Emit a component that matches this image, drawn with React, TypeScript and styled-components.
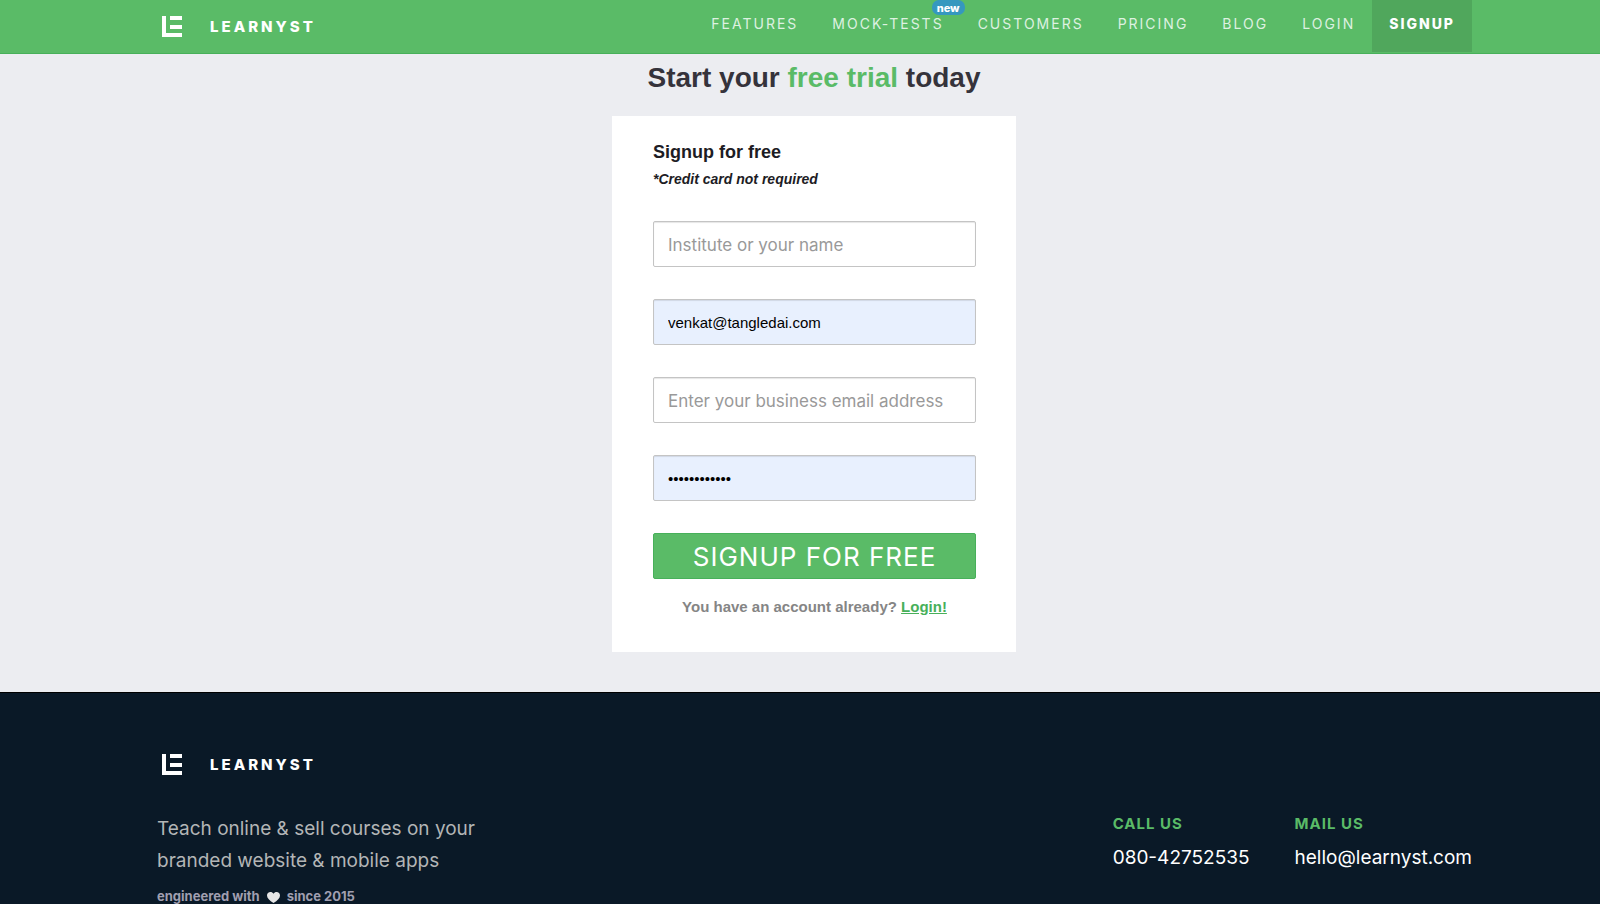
import React from "react";
import styled, { createGlobalStyle } from "styled-components";

const GlobalStyle = createGlobalStyle`
  *, *::before, *::after { box-sizing: border-box; }
  html, body { margin: 0; padding: 0; }
  body {
    background: #0a1927;
    color: #1d1c24;
    font-family: Inter, "Liberation Sans", sans-serif;
    -webkit-font-smoothing: antialiased;
  }
  h1, h2, h3, p { margin: 0; }
  a { color: inherit; text-decoration: none; }
`;

const sans = `"Liberation Sans", Arial, sans-serif`;

const Page = styled.div`
  display: flex;
  flex-direction: column;
  min-height: 100vh;
`;

const Header = styled.header`
  display: flex;
  justify-content: space-between;
  align-items: stretch;
  padding: 0 128px 0 157px;
  background: #5abb67;
  border-bottom: 1px solid #47b05a;
`;

const Brand = styled.a`
  display: flex;
  align-items: center;
  gap: 28px;
  height: 53px;
  padding-left: 5px;
  color: #fff;
`;

const Mark = styled.svg`
  display: block;
  width: 20px;
  height: 21px;
`;

const Wordmark = styled.span`
  padding-top: 1px;
  font-size: 15px;
  line-height: 20px;
  font-weight: 800;
  letter-spacing: 3px;
`;

const Nav = styled.nav`
  display: flex;
  align-items: flex-start;
`;

const NavLink = styled.a<{ $active?: boolean }>`
  position: relative;
  height: 52px;
  padding: 14px 17px 0;
  font-size: 14px;
  line-height: 20px;
  letter-spacing: 2px;
  font-weight: ${(p) => (p.$active ? 800 : 400)};
  color: ${(p) => (p.$active ? "#fff" : "#def1e1")};
  background: ${(p) => (p.$active ? "#50a75c" : "transparent")};
`;

const NewBadge = styled.span`
  position: absolute;
  top: 0;
  right: -4px;
  width: 33px;
  height: 15px;
  border-radius: 7px;
  background: #3598bf;
  color: #fff;
  font-size: 11px;
  line-height: 16px;
  font-weight: 800;
  letter-spacing: 0;
  text-align: center;
`;

const Main = styled.main`
  display: flex;
  flex-direction: column;
  align-items: center;
  padding: 0 128px 40px 156px;
  background: #ecedf1;
  font-family: ${sans};
`;

const Title = styled.h1`
  padding: 8px 0 22px;
  font-size: 28px;
  line-height: 32px;
  font-weight: 700;
  color: #35333b;
`;

const Accent = styled.span`
  color: #5abb67;
`;

const Card = styled.form`
  width: 404px;
  padding: 24px 40px 13px 41px;
  background: #fff;
`;

const CardTitle = styled.h2`
  font-size: 18px;
  line-height: 24px;
  font-weight: 700;
`;

const CardNote = styled.p`
  padding: 5px 0 32px;
  font-size: 14px;
  line-height: 20px;
  font-style: italic;
  font-weight: 700;
`;

const Field = styled.input<{ $filled?: boolean }>`
  display: block;
  width: 100%;
  height: 46px;
  margin-bottom: 32px;
  padding: 1px 14px 0;
  border: 1px solid #c4c4c4;
  border-radius: 2px;
  box-shadow: inset 0 1px 1px rgba(0, 0, 0, 0.1);
  outline: none;
  background: ${(p) => (p.$filled ? "#e8f0fe" : "#fff")};
  color: #000;
  font-family: ${(p) => (p.$filled ? sans : `Inter, ${sans}`)};
  font-size: ${(p) => (p.$filled ? 15 : 17)}px;
  &::placeholder { color: #999; opacity: 1; }
`;

const Submit = styled.button`
  display: block;
  width: 100%;
  height: 46px;
  padding: 0;
  border: 1px solid #47b05a;
  border-radius: 2px;
  background: #5abb67;
  color: #fff;
  font-family: Inter, ${sans};
  font-size: 26px;
  letter-spacing: 1px;
`;

const LoginLine = styled.p`
  padding: 18px 0 22px;
  font-size: 15px;
  line-height: 20px;
  font-weight: 700;
  text-align: center;
  color: #858585;
`;

const LoginLink = styled.a`
  color: #47b05a;
  text-decoration: underline;
`;

const Footer = styled.footer`
  flex: 1;
  padding: 45px 128px 0 157px;
  border-top: 1px solid #000;
  background: #0a1927;
`;

const FooterColumns = styled.div`
  display: flex;
  justify-content: space-between;
  align-items: flex-start;
  padding-top: 21px;
`;

const Tagline = styled.p`
  max-width: 340px;
  padding-top: 1px;
  font-size: 19px;
  line-height: 32px;
  color: #b3b5b6;
`;

const Credit = styled.p`
  display: flex;
  align-items: center;
  gap: 7px;
  height: 27px;
  padding-top: 11px;
  font-size: 13px;
  line-height: 16px;
  font-weight: 700;
  color: #a09fb0;
`;

const Heart = styled.svg`
  display: block;
  width: 13px;
  height: 11px;
  margin-top: 3px;
`;

const Contacts = styled.div`
  display: flex;
  gap: 45px;
`;

const ContactTitle = styled.h3`
  font-size: 15px;
  line-height: 24px;
  font-weight: 700;
  letter-spacing: 1px;
  color: #5abb67;
`;

const ContactLink = styled.a`
  display: block;
  padding-top: 10px;
  font-size: 19px;
  line-height: 24px;
  color: #fff;
`;

function Logo() {
  return (
    <Brand href="#home" aria-label="Learnyst home">
      <Mark viewBox="0 0 20 21" aria-hidden="true">
        <path fill="#fff" d="M0 0h4v17h16v4H0zM8 0h12v4H8zM8 9h12v4H8z" />
      </Mark>
      <Wordmark>LEARNYST</Wordmark>
    </Brand>
  );
}

export default function App() {
  return (
    <Page>
      <GlobalStyle />
      <Header>
        <Logo />
        <Nav aria-label="Main">
          <NavLink href="#features">FEATURES</NavLink>
          <NavLink href="#mock-tests">
            MOCK-TESTS
            <NewBadge>new</NewBadge>
          </NavLink>
          <NavLink href="#customers">CUSTOMERS</NavLink>
          <NavLink href="#pricing">PRICING</NavLink>
          <NavLink href="#blog">BLOG</NavLink>
          <NavLink href="#login">LOGIN</NavLink>
          <NavLink href="#signup" $active>SIGNUP</NavLink>
        </Nav>
      </Header>
      <Main>
        <Title>
          Start your <Accent>free trial</Accent> today
        </Title>
        <Card onSubmit={(e) => e.preventDefault()}>
          <CardTitle>Signup for free</CardTitle>
          <CardNote>*Credit card not required</CardNote>
          <Field type="text" placeholder="Institute or your name" aria-label="Institute or your name" />
          <Field type="text" $filled defaultValue="venkat@tangledai.com" aria-label="Login email" />
          <Field type="email" placeholder="Enter your business email address" aria-label="Business email address" />
          <Field type="password" $filled defaultValue="abcdefghijkl" aria-label="Password" />
          <Submit type="submit">SIGNUP FOR FREE</Submit>
          <LoginLine>
            You have an account already? <LoginLink href="#login">Login!</LoginLink>
          </LoginLine>
        </Card>
      </Main>
      <Footer>
        <Logo />
        <FooterColumns>
          <div>
            <Tagline>Teach online &amp; sell courses on your branded website &amp; mobile apps</Tagline>
            <Credit>
              engineered with
              <Heart viewBox="0 0 13 12" preserveAspectRatio="none" aria-label="love" role="img">
                <path fill="#e6e6e6" d="M6.500 12C2.500 9 0 6.600 0 3.700 0 1.600 1.500 0 3.400 0c1.300 0 2.400.7 3.100 1.800C7.200.7 8.300 0 9.600 0 11.500 0 13 1.600 13 3.700c0 2.900-2.500 5.300-6.500 8.300z" />
              </Heart>
              since 2015
            </Credit>
          </div>
          <Contacts>
            <div>
              <ContactTitle>CALL US</ContactTitle>
              <ContactLink href="tel:08042752535">080-42752535</ContactLink>
            </div>
            <div>
              <ContactTitle>MAIL US</ContactTitle>
              <ContactLink href="mailto:hello@learnyst.com">hello@learnyst.com</ContactLink>
            </div>
          </Contacts>
        </FooterColumns>
      </Footer>
    </Page>
  );
}
